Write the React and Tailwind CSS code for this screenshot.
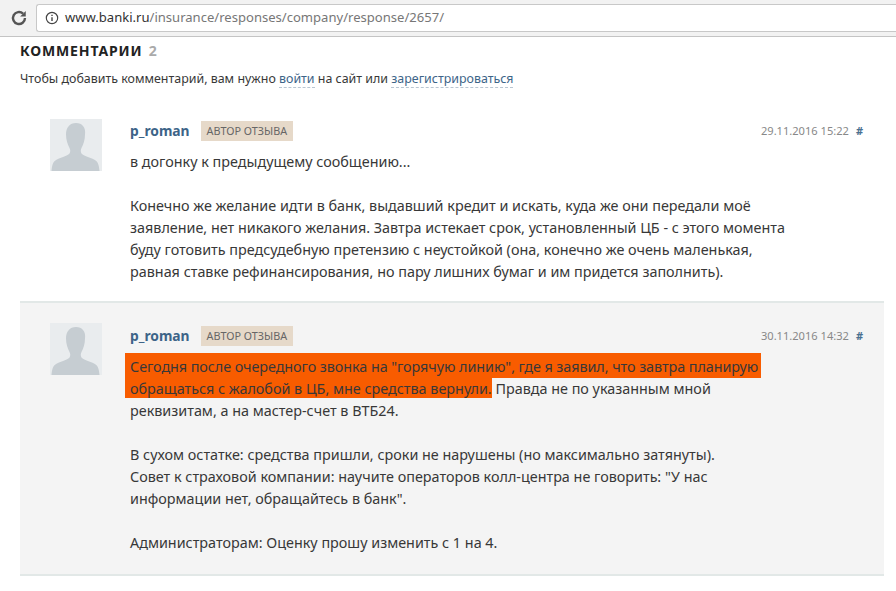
import React from 'react';

const font = "font-['Noto_Sans','Open_Sans',sans-serif]";

const Avatar = () => (
  <div className="w-[52px] h-[52px] shrink-0 bg-[#e9ecee] overflow-hidden">
    <svg viewBox="0 0 52 52" className="w-full h-full">
      <path
        d="M26 4c-6.200 0-10 4.600-10 11.500 0 5 1.500 10 3.500 13.500 1 1.800 1 4 0 5.500-1.500 2-8 3.800-13 6.200-3.200 1.500-4.500 5-5 11.300h48c-.5-6.300-1.800-9.800-5-11.300-5-2.400-11.500-4.200-13-6.200-1-1.500-1-3.700 0-5.500 2-3.500 3.500-8.500 3.500-13.500C36 8.600 32.200 4 26 4z"
        fill="#c6cdd2"
      />
    </svg>
  </div>
);

const CommentHead = ({ date }) => (
  <div className="flex items-center h-[22px] mb-[9px]">
    <a className="text-[13.800px] font-bold text-[#3d6488] mr-[11px]">p_roman</a>
    <span className="bg-[#e6d9c9] text-[#666] text-[10.800px] h-5 leading-5 px-[6px]">АВТОР ОТЗЫВА</span>
    <span className="ml-auto text-[11.100px] text-[#888]">{date}</span>
    <span className="ml-[7px] text-[11px] font-bold text-[#4a7090]">#</span>
  </div>
);

const Comment = ({ date, gray, children }) => (
  <div className={gray ? 'ml-5 mr-3 bg-[#f4f4f4] border-t-[2px] border-b-[2px] border-[#e2e8e7] pl-[30px] pr-[21px] pt-[20px] pb-[20px]' : 'ml-5 mr-3 pl-[30px] pr-[21px] pt-[31px] pb-[18px]'}>
    <div className="flex gap-7">
      <Avatar />
      <div className={`flex-1 min-w-0 text-[14.370px] leading-[22px] text-[#383838] ${gray ? 'pt-[2px]' : 'pt-[1px]'}`}>
        <CommentHead date={date} />
        {children}
      </div>
    </div>
  </div>
);

export default function App() {
  return (
    <div className={`w-[896px] h-[591px] overflow-hidden bg-white ${font}`}>
      {/* browser bar */}
      <div className="h-[37px] bg-[#f2f2f2] border-b border-[#c4c4c4] flex items-center pl-[10px]">
        <svg viewBox="0 0 24 24" className="w-[18px] h-[18px] mr-[8px]" fill="none" stroke="#555" strokeWidth="3.200">
          <path d="M20 12a8 8 0 1 1-2.600-5.900" />
          <path d="M21 2.500v7.500h-7.500z" fill="#555" stroke="none" />
        </svg>
        <div className="flex-1 h-[28px] bg-white border border-r-0 border-[#c8c8c8] rounded-l-[3px] flex items-center pl-[8px] text-[13.070px]">
          <svg viewBox="0 0 16 16" className="w-[14px] h-[14px] mr-[6px]" fill="none" stroke="#444" strokeWidth="1.300">
            <circle cx="8" cy="8" r="6.500" />
            <path d="M8 7v4.500M8 4.300v1.400" strokeWidth="1.600" />
          </svg>
          <span className="text-[#333]">www.banki.ru</span>
          <span className="text-[#777]">/insurance/responses/company/response/2657/</span>
        </div>
      </div>

      {/* heading */}
      <div className="pl-5 pt-[4px]">
        <h2 className="text-[14px] leading-[18px] font-bold tracking-[0.85px] text-[#222] mt-[1px]">
          КОММЕНТАРИИ <span className="text-[#aaa] ml-[2px]">2</span>
        </h2>
        <p className="text-[12.430px] leading-[18px] text-[#383838] mt-[10px]">
          Чтобы добавить комментарий, вам нужно{' '}
          <a className="text-[#3d6488] border-b border-dashed border-[#b9c6d2]">войти</a> на сайт или{' '}
          <a className="text-[#3d6488] border-b border-dashed border-[#b9c6d2]">зарегистрироваться</a>
        </p>
      </div>

      <Comment date="29.11.2016 15:22">
        <p>в догонку к предыдущему сообщению...</p>
        <p className="mt-[22px]">
          Конечно же желание идти в банк, выдавший кредит и искать, куда же они передали моё
          <br />
          заявление, нет никакого желания. Завтра истекает срок, установленный ЦБ - с этого момента
          <br />
          буду готовить предсудебную претензию с неустойкой (она, конечно же очень маленькая,
          <br />
          равная ставке рефинансирования, но пару лишних бумаг и им придется заполнить).
        </p>
      </Comment>

      <Comment date="30.11.2016 14:32" gray>
        <div className="h-[22px]">
          <span className="inline-block align-top h-[25px] -mt-[3px] pt-[3px] -ml-[5px] pl-[5px] pr-[3px] tracking-[-0.06px] bg-[#f85c00]">
            Сегодня после очередного звонка на "горячую линию", где я заявил, что завтра планирую
          </span>
        </div>
        <div className="h-[22px]">
          <span className="inline-block align-top h-[20px] -ml-[5px] pl-[5px] bg-[#f85c00]">
            обращаться с жалобой в ЦБ, мне средства вернули.
          </span>{' '}
          Правда не по указанным мной
        </div>
        <p>реквизитам, а на мастер-счет в ВТБ24.</p>
        <p className="mt-[22px]">
          В сухом остатке: средства пришли, сроки не нарушены (но максимально затянуты).
          <br />
          Совет к страховой компании: научите операторов колл-центра не говорить: "У нас
          <br />
          информации нет, обращайтесь в банк".
        </p>
        <p className="mt-[22px]">Администраторам: Оценку прошу изменить с 1 на 4.</p>
      </Comment>
    </div>
  );
}
